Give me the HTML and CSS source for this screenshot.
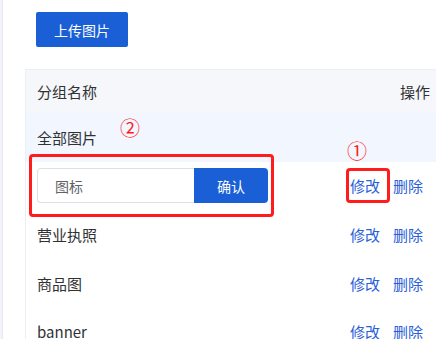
FILE: index.html
```html
<!DOCTYPE html>
<html lang="zh-CN">
<head>
<meta charset="utf-8">
<title>图片分组</title>
<link rel="stylesheet" href="styles.css">
</head>
<body>
<div class="page">
  <div class="side"></div>
  <main class="main">
    <div class="toolbar"><button class="btn-primary">上传图片</button></div>
    <div class="table">
      <div class="tr thead">
        <div class="td name">分组名称</div>
        <div class="td ops ops-head">操作</div>
      </div>
      <div class="tr active">
        <div class="td name">全部图片</div>
        <div class="td ops"></div>
      </div>
      <div class="tr">
        <div class="td name">
          <div class="edit">
            <input class="edit-input" value="图标">
            <button class="edit-btn">确认</button>
          </div>
        </div>
        <div class="td ops"><a class="link">修改</a><a class="link">删除</a></div>
      </div>
      <div class="tr">
        <div class="td name">营业执照</div>
        <div class="td ops"><a class="link">修改</a><a class="link">删除</a></div>
      </div>
      <div class="tr">
        <div class="td name">商品图</div>
        <div class="td ops"><a class="link">修改</a><a class="link">删除</a></div>
      </div>
      <div class="tr">
        <div class="td name">banner</div>
        <div class="td ops"><a class="link">修改</a><a class="link">删除</a></div>
      </div>
    </div>
  </main>
  <div class="anno-box box-edit"></div>
  <div class="anno-box box-link"></div>
  <span class="anno-num num-1">①</span>
  <span class="anno-num num-2">②</span>
</div>
</body>
</html>
```
FILE: styles.css
```css
html, body {
  margin: 0;
  padding: 0;
  background: #ffffff;
  overflow: hidden;
  font-family: "Noto Sans CJK SC", "Noto Sans", sans-serif;
  color: #303133;
}
.page {
  position: relative;
  display: flex;
  width: 436px;
  height: 339px;
  overflow: hidden;
}
.side {
  flex: 0 0 2px;
  background: #f2f3fb;
  border-right: 1px solid #e6e8f1;
}
.main {
  flex: 1 0 auto;
  padding: 12px 0 0 22px;
}
.toolbar {
  padding-left: 11px;
  height: 35px;
  margin-bottom: 22px;
}
.btn-primary {
  height: 35px;
  width: 92px;
  border: none;
  border-radius: 2px;
  background: #1a5fd6;
  color: #ffffff;
  font-family: inherit;
  font-size: 14px;
  padding: 0;
}
.table {
  width: 421px;
  border-left: 1px solid #ebeef5;
  border-top: 1px solid #ebeef5;
}
.tr {
  display: flex;
  align-items: center;
  height: 48.6px;
  font-size: 15px;
}
.thead {
  height: 43px;
  background: #f5f7fa;
}
.active {
  background: #f2f6fe;
}
.name {
  width: 300px;
  padding-left: 11px;
  box-sizing: border-box;
}
.ops {
  display: flex;
  gap: 13px;
  padding-left: 24px;
  width: 120px;
  box-sizing: border-box;
}
.ops-head {
  padding-left: 74px;
}
.link {
  color: #2a5fd8;
  cursor: pointer;
}
.edit {
  display: flex;
  width: 231px;
  height: 35px;
}
.edit-input {
  width: 157px;
  box-sizing: border-box;
  height: 35px;
  border: 1px solid #dcdfe6;
  border-right: none;
  border-radius: 4px 0 0 4px;
  padding: 0 0 0 17px;
  font-family: inherit;
  font-size: 14px;
  color: #606266;
  outline: none;
}
.edit-btn {
  width: 74px;
  height: 35px;
  border: none;
  border-radius: 0 4px 4px 0;
  background: #1a5fd6;
  color: #ffffff;
  font-family: inherit;
  font-size: 14px;
  padding: 0;
}
.anno-box {
  position: absolute;
  box-sizing: border-box;
  border: 3px solid #ff1c1c;
  border-radius: 4px;
}
.box-edit {
  left: 29px;
  top: 154px;
  width: 245px;
  height: 63px;
}
.box-link {
  left: 346px;
  top: 168px;
  width: 44px;
  height: 35px;
}
.anno-num {
  position: absolute;
  width: 22px;
  height: 22px;
  line-height: 22px;
  text-align: center;
  font-size: 20px;
  color: #ff1c1c;
}
.num-1 {
  left: 346px;
  top: 140px;
}
.num-2 {
  left: 119px;
  top: 117px;
}
```
